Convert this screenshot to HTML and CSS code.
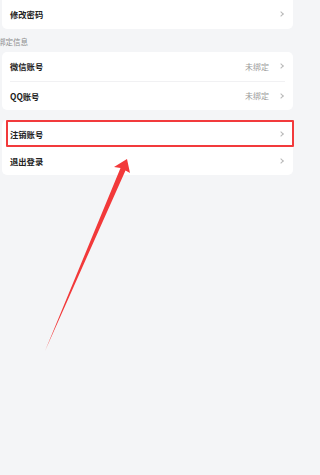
FILE: index.html
```html
<!DOCTYPE html>
<html lang="zh">
<head>
<meta charset="utf-8">
<link rel="stylesheet" href="styles.css">
</head>
<body>
<div class="page">
  <div class="card card-top">
    <div class="row"><span class="label">修改密码</span><span class="right"><span class="chev"></span></span></div>
  </div>
  <div class="section">绑定信息</div>
  <div class="card">
    <div class="row sep"><span class="label">微信账号</span><span class="right"><span class="val">未绑定</span><span class="chev"></span></span></div>
    <div class="row"><span class="label">QQ账号</span><span class="right"><span class="val">未绑定</span><span class="chev"></span></span></div>
  </div>
  <div class="card card-gap">
    <div class="row highlight"><span class="label">注销账号</span><span class="right"><span class="chev"></span></span></div>
    <div class="row"><span class="label">退出登录</span><span class="right"><span class="chev"></span></span></div>
  </div>
  <svg class="arrow" width="300" height="475" viewBox="0 0 300 475">
    <polygon points="127,159 130,173 125.5,170.5 45,351 120.5,168 114,167" fill="#f2393a"/>
  </svg>
</div>
</body>
</html>
```
FILE: styles.css
```css
html, body {
  margin: 0;
  padding: 0;
  background: #f4f5f7;
}
.page {
  position: relative;
  width: 300px;
  height: 475px;
  overflow: hidden;
  font-family: "Noto Sans CJK SC", "Noto Sans", sans-serif;
}
.card {
  background: #ffffff;
  margin: 0 7px 0 2px;
  border-radius: 5px;
  padding: 0 8px;
}
.card-top {
  margin-top: -2px;
  border-radius: 0 0 5px 5px;
}
.card-gap {
  margin-top: 10px;
}
.card-gap .row {
  height: 27.5px;
}
.row {
  position: relative;
  height: 28.5px;
  display: flex;
  align-items: center;
  justify-content: space-between;
}
.card-top .row {
  height: 31px;
}
.sep {
  border-bottom: 1px solid #f1f1f3;
}
.label {
  font-size: 8.3px;
  font-weight: 700;
  color: #222;
}
.right {
  display: flex;
  align-items: center;
  gap: 10px;
}
.val {
  font-size: 8px;
  color: #9a9a9a;
}
.chev {
  width: 3px;
  height: 3px;
  border-top: 1px solid #b8b8b8;
  border-right: 1px solid #b8b8b8;
  transform: rotate(45deg);
  margin-right: 2px;
}
.section {
  font-size: 7.5px;
  color: #8e8e8e;
  margin-left: -2px;
  padding: 9px 0 6px;
  line-height: 8px;
}
.highlight::after {
  content: "";
  position: absolute;
  left: -4px;
  right: -9px;
  top: 0;
  bottom: 1px;
  border: 2px solid #f23a3c;
  border-radius: 1px;
}
.arrow {
  position: absolute;
  left: 0;
  top: 0;
}
```
